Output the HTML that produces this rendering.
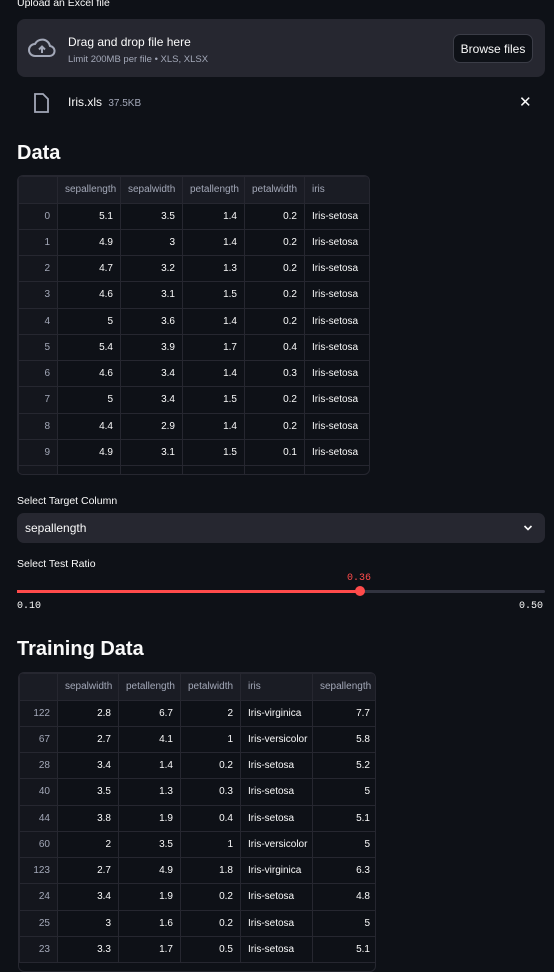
<!DOCTYPE html>
<html><head><meta charset="utf-8"><style>
*{box-sizing:border-box;margin:0;padding:0}
body{width:554px;height:954px;overflow:hidden;background:#0e1117;color:#fafafa;font-family:"Liberation Sans",sans-serif;position:relative}
.a{position:absolute}
.lbl{font-size:10.5px;color:#fafafa}
table{border-collapse:collapse;table-layout:fixed;font-size:10px}
td{border:1px solid #262730;height:26.25px;padding:0 7px;white-space:nowrap;overflow:hidden;text-align:right;color:#fafafa}
tr:first-child td{background:#1a1c24;color:#a3a8b8;text-align:left;height:26.5px}
td:first-child{color:#a3a8b8;background:#14161d}
td.s{text-align:left}
.wrap{position:absolute;border:1px solid #262730;border-radius:6px;overflow:hidden}
.mono{font-family:"Liberation Mono",monospace;font-size:10px}
</style></head><body>
<div class="a lbl" style="left:17px;top:-3px">Upload an Excel file</div>
<div class="a" style="left:17px;top:19px;width:528px;height:58px;background:#262730;border-radius:8px"></div>
<svg class="a" style="left:28px;top:37px" width="28" height="22" viewBox="0 0 28 22"><path d="M7 19h14a5 5 0 0 0 1-10A8 8 0 0 0 7 7a6 6 0 0 0 0 12z" fill="none" stroke="#a3a8b8" stroke-width="2"/><path d="M14 16V10M11 12.5l3-3 3 3" fill="none" stroke="#a3a8b8" stroke-width="2"/></svg>
<div class="a" style="left:68px;top:35px;font-size:12px;color:#fafafa">Drag and drop file here</div>
<div class="a" style="left:68px;top:54px;font-size:9.5px;color:#a3a8b8">Limit 200MB per file • XLS, XLSX</div>
<div class="a" style="left:453px;top:34px;width:80px;height:29px;border:1px solid #3b3d47;border-radius:7px;background:#0e1117;font-size:12px;line-height:28px;text-align:center">Browse files</div>
<svg class="a" style="left:33px;top:93px" width="16" height="20" viewBox="0 0 16 20"><path d="M2 1h8l5 5v13H2z" fill="none" stroke="#a3a8b8" stroke-width="1.8"/></svg>
<div class="a" style="left:68px;top:95px;font-size:12px">Iris.xls <span style="font-size:10px;color:#a3a8b8;margin-left:3px">37.5KB</span></div>
<div class="a" style="left:519px;top:93px;font-size:15px">✕</div>
<div class="a" style="left:17px;top:142px;font-size:20px;font-weight:bold">Data</div>
<div class="wrap" style="left:17px;top:175px;width:353px;height:300px">
<table style="width:353px">
<colgroup><col style="width:39px"><col style="width:63px"><col style="width:62px"><col style="width:62px"><col style="width:60px"><col style="width:67px"></colgroup>
<tr><td></td><td>sepallength</td><td>sepalwidth</td><td>petallength</td><td>petalwidth</td><td>iris</td></tr>
<tr><td>0</td><td>5.1</td><td>3.5</td><td>1.4</td><td>0.2</td><td class="s">Iris-setosa</td></tr>
<tr><td>1</td><td>4.9</td><td>3</td><td>1.4</td><td>0.2</td><td class="s">Iris-setosa</td></tr>
<tr><td>2</td><td>4.7</td><td>3.2</td><td>1.3</td><td>0.2</td><td class="s">Iris-setosa</td></tr>
<tr><td>3</td><td>4.6</td><td>3.1</td><td>1.5</td><td>0.2</td><td class="s">Iris-setosa</td></tr>
<tr><td>4</td><td>5</td><td>3.6</td><td>1.4</td><td>0.2</td><td class="s">Iris-setosa</td></tr>
<tr><td>5</td><td>5.4</td><td>3.9</td><td>1.7</td><td>0.4</td><td class="s">Iris-setosa</td></tr>
<tr><td>6</td><td>4.6</td><td>3.4</td><td>1.4</td><td>0.3</td><td class="s">Iris-setosa</td></tr>
<tr><td>7</td><td>5</td><td>3.4</td><td>1.5</td><td>0.2</td><td class="s">Iris-setosa</td></tr>
<tr><td>8</td><td>4.4</td><td>2.9</td><td>1.4</td><td>0.2</td><td class="s">Iris-setosa</td></tr>
<tr><td>9</td><td>4.9</td><td>3.1</td><td>1.5</td><td>0.1</td><td class="s">Iris-setosa</td></tr>
<tr><td></td><td></td><td></td><td></td><td></td><td></td></tr>
</table></div>
<div class="a lbl" style="left:17px;top:495px">Select Target Column</div>
<div class="a" style="left:17px;top:513px;width:528px;height:30px;background:#262730;border-radius:7px"></div>
<div class="a" style="left:25px;top:521px;font-size:12px">sepallength</div>
<svg class="a" style="left:523px;top:524px" width="10" height="8" viewBox="0 0 10 8"><path d="M1.5 2l3.5 3.5L8.5 2" fill="none" stroke="#fafafa" stroke-width="1.6"/></svg>
<div class="a lbl" style="left:17px;top:558px">Select Test Ratio</div>
<div class="a mono" style="left:347px;top:573px;color:#ff4b4b">0.36</div>
<div class="a" style="left:17px;top:590px;width:528px;height:3px;background:#31333f;border-radius:2px"></div>
<div class="a" style="left:17px;top:590px;width:343px;height:3px;background:#ff4b4b"></div>
<div class="a" style="left:355px;top:586px;width:10px;height:10px;border-radius:50%;background:#ff4b4b"></div>
<div class="a mono" style="left:17px;top:601px">0.10</div>
<div class="a mono" style="left:519px;top:601px">0.50</div>
<div class="a" style="left:17px;top:638px;font-size:20px;font-weight:bold">Training Data</div>
<div class="wrap" style="left:18px;top:672px;width:358px;height:300px">
<table style="width:358px">
<colgroup><col style="width:38px"><col style="width:61px"><col style="width:62px"><col style="width:60px"><col style="width:72px"><col style="width:65px"></colgroup>
<tr><td></td><td>sepalwidth</td><td>petallength</td><td>petalwidth</td><td>iris</td><td>sepallength</td></tr>
<tr><td>122</td><td>2.8</td><td>6.7</td><td>2</td><td class="s">Iris-virginica</td><td>7.7</td></tr>
<tr><td>67</td><td>2.7</td><td>4.1</td><td>1</td><td class="s">Iris-versicolor</td><td>5.8</td></tr>
<tr><td>28</td><td>3.4</td><td>1.4</td><td>0.2</td><td class="s">Iris-setosa</td><td>5.2</td></tr>
<tr><td>40</td><td>3.5</td><td>1.3</td><td>0.3</td><td class="s">Iris-setosa</td><td>5</td></tr>
<tr><td>44</td><td>3.8</td><td>1.9</td><td>0.4</td><td class="s">Iris-setosa</td><td>5.1</td></tr>
<tr><td>60</td><td>2</td><td>3.5</td><td>1</td><td class="s">Iris-versicolor</td><td>5</td></tr>
<tr><td>123</td><td>2.7</td><td>4.9</td><td>1.8</td><td class="s">Iris-virginica</td><td>6.3</td></tr>
<tr><td>24</td><td>3.4</td><td>1.9</td><td>0.2</td><td class="s">Iris-setosa</td><td>4.8</td></tr>
<tr><td>25</td><td>3</td><td>1.6</td><td>0.2</td><td class="s">Iris-setosa</td><td>5</td></tr>
<tr><td>23</td><td>3.3</td><td>1.7</td><td>0.5</td><td class="s">Iris-setosa</td><td>5.1</td></tr>
</table></div>
</body></html>
